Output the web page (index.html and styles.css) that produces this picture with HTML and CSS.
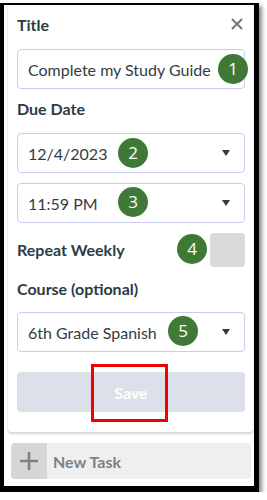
FILE: index.html
```html
<!DOCTYPE html>
<html>
<head>
<meta charset="utf-8">
<link rel="stylesheet" href="styles.css">
</head>
<body>
<div class="frame">
  <div class="card">
    <div class="header">
      <span class="label">Title</span>
      <svg class="close" width="12" height="12" viewBox="0 0 12 12"><path d="M1.5 1.5 L10.5 10.5 M10.5 1.5 L1.5 10.5" stroke="#6b7780" stroke-width="2" stroke-linecap="round"/></svg>
    </div>
    <div class="field title-field">
      <span class="value">Complete my Study Guide</span>
      <span class="badge b1">1</span>
    </div>
    <div class="label due">Due Date</div>
    <div class="field select date-field">
      <span class="value">12/4/2023</span>
      <svg class="arrow" width="8" height="6" viewBox="0 0 8 6"><path d="M0 0 H8 L4 6 Z" fill="#2d3b45"/></svg>
      <span class="badge b2">2</span>
    </div>
    <div class="field select time-field">
      <span class="value">11:59 PM</span>
      <svg class="arrow" width="8" height="6" viewBox="0 0 8 6"><path d="M0 0 H8 L4 6 Z" fill="#2d3b45"/></svg>
      <span class="badge b3">3</span>
    </div>
    <div class="repeat">
      <span class="label">Repeat Weekly</span>
      <span class="toggle"></span>
      <span class="badge b4">4</span>
    </div>
    <div class="label course">Course (optional)</div>
    <div class="field select course-field">
      <span class="value">6th Grade Spanish</span>
      <svg class="arrow" width="8" height="6" viewBox="0 0 8 6"><path d="M0 0 H8 L4 6 Z" fill="#2d3b45"/></svg>
      <span class="badge b5">5</span>
    </div>
    <div class="save">
      <span>Save</span>
      <span class="highlight"></span>
    </div>
  </div>
  <div class="newtask">
    <span class="plus"><svg width="20" height="20" viewBox="0 0 20 20"><path d="M10 1 V19 M1 10 H19" stroke="#7b8287" stroke-width="2.6"/></svg></span>
    <span class="nt-text">New Task</span>
  </div>
</div>
</body>
</html>
```

FILE: styles.css
```css
html, body {
  margin: 0;
  padding: 0;
  background: #ffffff;
}
body {
  font-family: Lato, "Open Sans", sans-serif;
  color: #2d3b45;
}
.frame {
  margin-top: 3px;
  width: 250px;
  border-style: solid;
  border-color: #000;
  border-width: 2px 5px 6px 4px;
  box-shadow: 3px 3px 4px rgba(0,0,0,0.45);
  padding-bottom: 7px;
  background: #fff;
}
.card {
  margin: 0 1px 0 4px;
  padding: 10px 8px 20px 9px;
  background: #fff;
  box-shadow: 0 2px 3px rgba(0,0,0,0.18);
  border-radius: 0 0 4px 4px;
}
.header {
  display: flex;
  justify-content: space-between;
  align-items: flex-start;
}
.close {
  margin-top: 3px;
  margin-right: 2px;
}
.label {
  font-size: 16px;
  font-weight: 700;
  line-height: 20px;
  color: #2d3b45;
}
.field {
  position: relative;
  box-sizing: border-box;
  height: 40px;
  border: 1px solid #c8ccef;
  border-radius: 4px;
  display: flex;
  align-items: center;
  padding: 0 14px 0 10px;
  font-size: 16px;
  color: #333c44;
}
.select {
  justify-content: space-between;
}
.title-field { margin-top: 14px; }
.due { margin-top: 10px; }
.date-field { margin-top: 14px; }
.time-field { margin-top: 10px; }
.repeat {
  position: relative;
  margin-top: 10px;
  height: 34px;
  display: flex;
  align-items: center;
  justify-content: space-between;
}
.toggle {
  width: 35px;
  height: 34px;
  border-radius: 4px;
  background: #d9d9d9;
}
.course { margin-top: 12px; }
.course-field { margin-top: 13px; }
.save {
  position: relative;
  margin-top: 20px;
  height: 40px;
  border-radius: 4px;
  background: #dce0e8;
  color: #fff;
  font-weight: 700;
  font-size: 16px;
  display: flex;
  align-items: center;
  justify-content: center;
}
.highlight {
  position: absolute;
  left: 74px;
  top: -8px;
  width: 71px;
  height: 52px;
  border: 3px solid #f00000;
}
.badge {
  position: absolute;
  width: 30px;
  height: 30px;
  border-radius: 50%;
  background: #3e7a36;
  color: #fff;
  font-size: 17px;
  line-height: 30px;
  text-align: center;
  font-family: "Open Sans", Lato, sans-serif;
}
.b1 { left: 200px; top: 4px; }
.b2 { left: 100px; top: 4px; }
.b3 { left: 100px; top: 3px; }
.b4 { left: 160px; top: 1px; }
.b5 { left: 150px; top: 3px; }
.newtask {
  margin: 11px 3px 0 7px;
  height: 36px;
  border-radius: 4px;
  background: #efefef;
  display: flex;
  align-items: center;
  overflow: hidden;
}
.plus {
  width: 36px;
  height: 36px;
  background: #d6d6d6;
  display: flex;
  align-items: center;
  justify-content: center;
}
.nt-text {
  margin-left: 6px;
  font-size: 16px;
  font-weight: 700;
  color: #7b8287;
}
```
